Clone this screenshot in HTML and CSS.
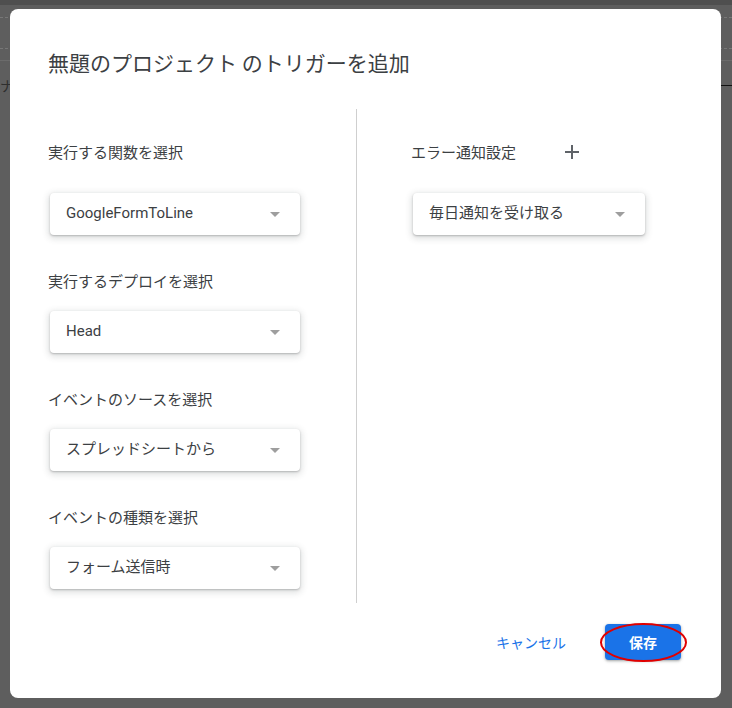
FILE: index.html
```html
<!DOCTYPE html>
<html lang="ja">
<head>
<meta charset="utf-8">
<title>トリガーを追加</title>
<link rel="stylesheet" href="styles.css">
</head>
<body>
<div class="backdrop">
  <div class="bg-top"></div>
  <div class="bg-line dashed l1"></div>
  <div class="bg-line dashed l2"></div>
  <div class="bg-line solid l3"></div>
  <div class="bg-text">ナ-</div>
  <div class="bg-mark"></div>
</div>
<div class="dialog">
  <h1 class="title">無題のプロジェクト のトリガーを追加</h1>
  <div class="body">
    <div class="col left">
      <div class="label first">実行する関数を選択</div>
      <div class="select w250"><span>GoogleFormToLine</span><i class="arrow"></i></div>
      <div class="label">実行するデプロイを選択</div>
      <div class="select w250"><span>Head</span><i class="arrow"></i></div>
      <div class="label">イベントのソースを選択</div>
      <div class="select w250"><span>スプレッドシートから</span><i class="arrow"></i></div>
      <div class="label">イベントの種類を選択</div>
      <div class="select w250"><span>フォーム送信時</span><i class="arrow"></i></div>
    </div>
    <div class="divider"></div>
    <div class="col right">
      <div class="label first head-row">エラー通知設定
        <svg class="plus" width="14" height="14" viewBox="0 0 14 14"><path d="M7 0v14M0 7h14" stroke="#5f6368" stroke-width="2" fill="none"/></svg>
      </div>
      <div class="select w232"><span>毎日通知を受け取る</span><i class="arrow"></i></div>
    </div>
  </div>
  <div class="footer">
    <button class="btn-cancel">キャンセル</button>
    <div class="save-wrap">
      <button class="btn-save">保存</button>
      <svg class="circle" width="89" height="41" viewBox="0 0 89 41"><ellipse cx="44.5" cy="20.5" rx="42.5" ry="18.5" fill="none" stroke="#e00000" stroke-width="2"/></svg>
    </div>
  </div>
</div>
</body>
</html>
```
FILE: styles.css
```css
html, body {
  margin: 0;
  padding: 0;
}
body {
  width: 732px;
  height: 708px;
  background: #5e5e5e;
  position: relative;
  overflow: hidden;
  font-family: Roboto, "Noto Sans CJK JP", sans-serif;
}
.backdrop {
  position: absolute;
  inset: 0;
}
.bg-top {
  height: 5px;
  background: #4f4f4f;
}
.bg-line {
  position: absolute;
  left: 0;
  right: 0;
  height: 0;
}
.dashed { border-top: 1px dashed #777; }
.solid { border-top: 1px solid #6b6b6b; }
.l1 { top: 17px; }
.l2 { top: 48px; }
.l3 { top: 60px; }
.bg-text {
  position: absolute;
  left: 0;
  top: 76px;
  font-size: 14px;
  line-height: 18px;
  color: #2e2e2e;
  font-family: "Noto Sans CJK JP", sans-serif;
}
.bg-mark {
  position: absolute;
  left: 721px;
  top: 85px;
  width: 11px;
  height: 1px;
  background: #111;
}
.dialog {
  position: relative;
  width: 711px;
  height: 689px;
  margin: 9px 0 0 10px;
  background: #fff;
  border-radius: 8px;
  box-sizing: border-box;
  padding: 38px 40px 38px 38px;
  display: flex;
  flex-direction: column;
}
.title {
  margin: 0;
  font-size: 21px;
  line-height: 30px;
  font-weight: 400;
  color: #3c4043;
  font-family: "Noto Sans CJK JP", sans-serif;
}
.body {
  display: flex;
  margin-top: 32px;
  height: 494px;
}
.col {
  display: flex;
  flex-direction: column;
  align-items: flex-start;
}
.col.left {
  width: 308px;
}
.col.right {
  padding-left: 54px;
}
.divider {
  width: 1px;
  background: #cfcfcf;
  height: 494px;
}
.label {
  font-size: 15px;
  line-height: 20px;
  height: 20px;
  color: #3c4043;
  margin-top: 36px;
  font-family: "Noto Sans CJK JP", sans-serif;
}
.label.first {
  margin-top: 33px;
}
.head-row {
  display: flex;
  align-items: center;
}
.plus {
  margin-left: 49px;
}
.select {
  margin-top: 20px;
  margin-left: 2px;
  height: 42px;
  box-sizing: border-box;
  padding: 0 20px 0 16px;
  display: flex;
  align-items: center;
  justify-content: space-between;
  background: #fff;
  border-radius: 4px;
  box-shadow: 0 1px 2px 0 rgba(60,64,67,.3), 0 2px 6px 2px rgba(60,64,67,.15);
  font-size: 15px;
  line-height: 18px;
  color: #3c4043;
  font-family: Roboto, "Noto Sans CJK JP", sans-serif;
}
.select span {
  display: block;
  height: 18px;
  line-height: 18px;
  margin-top: -2px;
}
.label.first + .select {
  margin-top: 31px;
}
.w250 { width: 250px; }
.w232 { width: 232px; }
.arrow {
  width: 0;
  height: 0;
  border-left: 5.5px solid transparent;
  border-right: 5.5px solid transparent;
  border-top: 5px solid #9e9e9e;
}
.footer {
  margin-top: auto;
  display: flex;
  justify-content: flex-end;
  align-items: center;
}
.btn-cancel {
  border: 0;
  background: none;
  color: #1a73e8;
  font-size: 14px;
  font-family: "Noto Sans CJK JP", sans-serif;
  padding: 0 8px;
  height: 36px;
  margin-right: 31px;
}
.save-wrap {
  position: relative;
}
.btn-save {
  display: block;
  width: 76px;
  height: 36px;
  border: 0;
  border-radius: 4px;
  background: #1a73e8;
  color: #fff;
  font-size: 14px;
  font-weight: 700;
  font-family: "Noto Sans CJK JP", sans-serif;
  box-shadow: 0 1px 2px 0 rgba(60,64,67,.3), 0 1px 3px 1px rgba(60,64,67,.15);
}
.circle {
  position: absolute;
  left: -6px;
  top: -2px;
}
```
